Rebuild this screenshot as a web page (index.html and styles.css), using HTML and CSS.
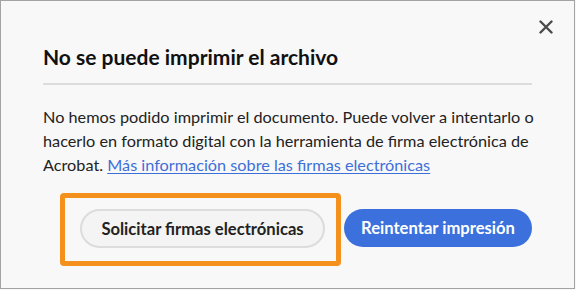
FILE: index.html
```html
<!DOCTYPE html>
<html lang="es">
<head>
<meta charset="utf-8">
<link rel="stylesheet" href="styles.css">
</head>
<body>
<div class="dialog">
  <button class="close" aria-label="Cerrar">
    <svg width="14" height="14" viewBox="0 0 14 14"><path d="M1.5 1.5L12.5 12.5M12.5 1.5L1.5 12.5" stroke="#4a4a4a" stroke-width="2.4" stroke-linecap="round" fill="none"/></svg>
  </button>
  <h1 class="title">No se puede imprimir el archivo</h1>
  <hr class="divider">
  <p class="body">No hemos podido imprimir el documento. Puede volver a intentarlo o hacerlo en formato digital con la herramienta de firma electrónica de Acrobat. <a class="link" href="#">Más información sobre las firmas electrónicas</a></p>
  <div class="actions">
    <div class="focus-wrap">
      <button class="btn btn-secondary">Solicitar firmas electrónicas</button>
      <span class="focus-ring"></span>
    </div>
    <button class="btn btn-primary">Reintentar impresión</button>
  </div>
</div>
</body>
</html>
```
FILE: styles.css
```css
html, body {
  margin: 0;
  padding: 0;
  background: #f8f8f8;
}
.dialog {
  position: relative;
  width: 575px;
  height: 289px;
  box-sizing: border-box;
  border: 1px solid #a3a3a3;
  background: #f8f8f8;
  padding: 44px 34px 0 42px;
  font-family: Lato, "Open Sans", sans-serif;
  color: #222;
}
.close {
  position: absolute;
  top: 18px;
  right: 20px;
  width: 16px;
  height: 16px;
  padding: 1px;
  border: 0;
  background: none;
  display: flex;
  align-items: center;
  justify-content: center;
}
.title {
  margin: 0;
  font-size: 21px;
  line-height: 24px;
  font-weight: 700;
  color: #111;
}
.divider {
  margin: 14px 8px 0 0;
  height: 2px;
  border: 0;
  background: #dcdcdc;
}
.body {
  margin: 20px 0 0 0;
  font-size: 16.25px;
  line-height: 24px;
  color: #222;
}
.link {
  color: #3d6fd8;
  text-decoration: underline;
  text-underline-offset: 2px;
}
.actions {
  margin: 32px 8px 0 0;
  display: flex;
  justify-content: flex-end;
  gap: 19px;
}
.focus-wrap {
  position: relative;
  display: flex;
}
.btn {
  height: 38px;
  border-radius: 20px;
  font-family: Lato, "Open Sans", sans-serif;
  font-size: 16.6px;
  font-weight: 700;
  box-sizing: border-box;
  padding: 0;
}
.btn-secondary {
  width: 245px;
  height: 39px;
  border: 2px solid #dcdcdc;
  background: #f4f4f4;
  color: #222;
}
.btn-primary {
  width: 188px;
  border: 0;
  background: #3c70dc;
  color: #fff;
}
.focus-ring {
  position: absolute;
  top: -16px;
  left: -20px;
  right: -16px;
  bottom: -18px;
  border: 5px solid #f4901c;
  border-radius: 4px;
  pointer-events: none;
}
```
